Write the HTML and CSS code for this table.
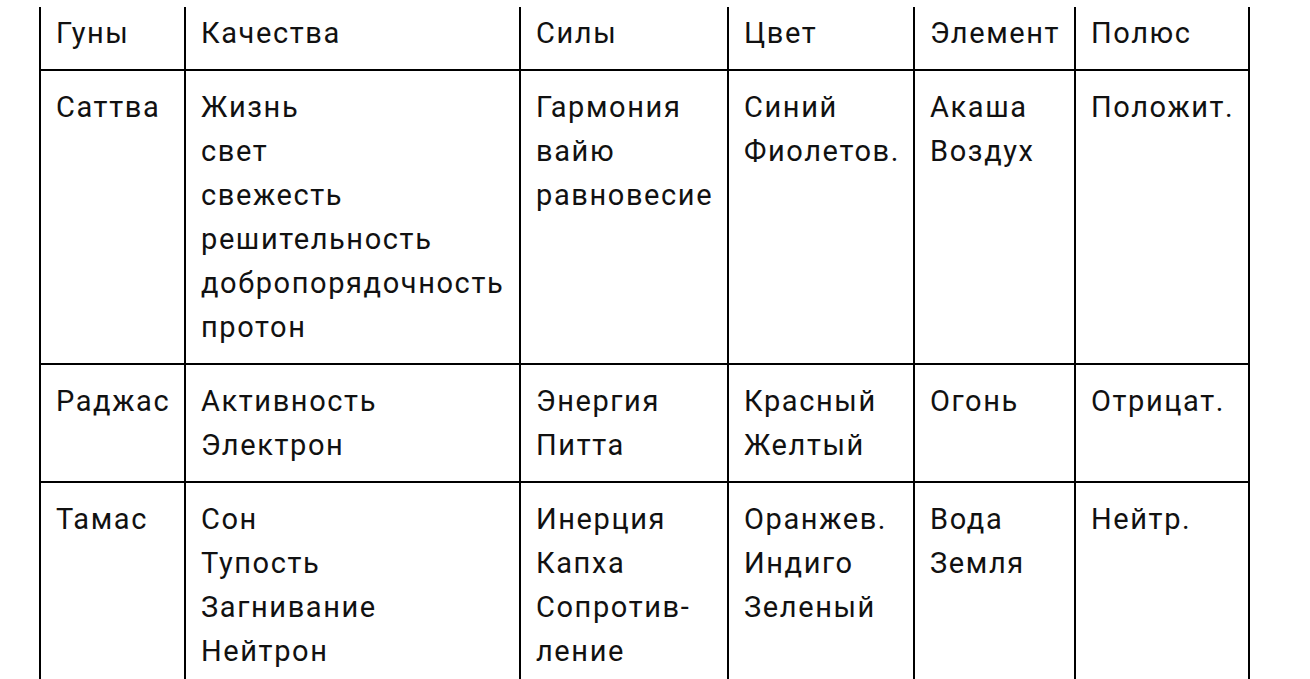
FILE: index.html
```html
<!DOCTYPE html>
<html lang="ru">
<head>
<meta charset="utf-8">
<title>Гуны</title>
<link rel="stylesheet" href="styles.css">
</head>
<body>
<table class="gunas">
  <colgroup>
    <col class="c1"><col class="c2"><col class="c3"><col class="c4"><col class="c5"><col class="c6">
  </colgroup>
  <thead>
    <tr>
      <th>Гуны</th><th>Качества</th><th>Силы</th><th>Цвет</th><th>Элемент</th><th>Полюс</th>
    </tr>
  </thead>
  <tbody>
    <tr>
      <td>Саттва</td>
      <td>Жизнь<br>свет<br>свежесть<br>решительность<br>добропорядочность<br>протон</td>
      <td>Гармония<br>вайю<br>равновесие</td>
      <td>Синий<br>Фиолетов.</td>
      <td>Акаша<br>Воздух</td>
      <td>Положит.</td>
    </tr>
    <tr>
      <td>Раджас</td>
      <td>Активность<br>Электрон</td>
      <td>Энергия<br>Питта</td>
      <td>Красный<br>Желтый</td>
      <td>Огонь</td>
      <td>Отрицат.</td>
    </tr>
    <tr>
      <td>Тамас</td>
      <td>Сон<br>Тупость<br>Загнивание<br>Нейтрон</td>
      <td>Инерция<br>Капха<br>Сопротив-<br>ление</td>
      <td>Оранжев.<br>Индиго<br>Зеленый</td>
      <td>Вода<br>Земля</td>
      <td>Нейтр.</td>
    </tr>
  </tbody>
</table>
</body>
</html>
```
FILE: styles.css
```css
html, body {
  margin: 0;
  padding: 0;
  background: #fff;
}
body {
  padding: 7px 0 0 39px;
  font-family: Roboto, "Noto Sans", sans-serif;
  font-size: 29px;
  line-height: 44px;
  letter-spacing: 1.6px;
  color: #111;
}
.gunas {
  border-collapse: collapse;
  table-layout: fixed;
  width: 1211px;
}
.c1 { width: 145px; }
.c2 { width: 335px; }
.c3 { width: 208px; }
.c4 { width: 186px; }
.c5 { width: 161px; }
.c6 { width: 174px; }
.gunas th,
.gunas td {
  border: 2px solid #000;
  padding: 14px 14px 14px 15px;
  text-align: left;
  vertical-align: top;
  font-weight: 400;
  white-space: nowrap;
}
.gunas th {
  border-top: none;
  padding-top: 4px;
}
```
